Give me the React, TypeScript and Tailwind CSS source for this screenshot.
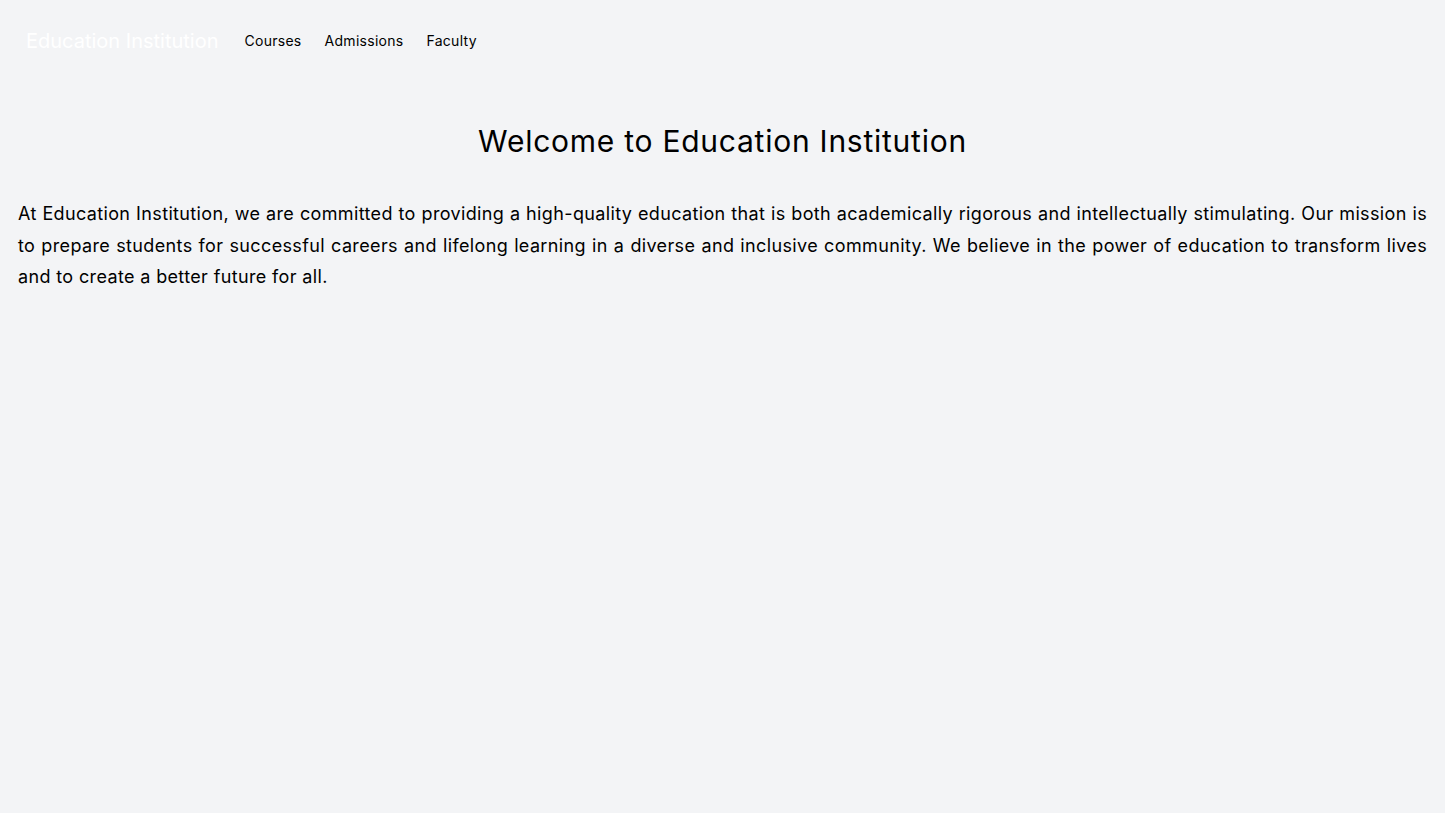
export default function App() {
  return (
    <div className="min-h-screen bg-gray-100 font-['Inter',sans-serif] text-black">
      <nav className="flex items-center pt-[27px] pb-6 pl-[26px] pr-6">
        <div className="text-xl text-white">Education Institution</div>
        <div className="ml-[26px] flex gap-[23px] text-sm tracking-[0.02em]">
          <a href="#">Courses</a>
          <a href="#">Admissions</a>
          <a href="#">Faculty</a>
        </div>
      </nav>
      <main className="px-[18px]">
        <h1 className="mt-11 text-center text-3xl tracking-[0.025em]">Welcome to Education Institution</h1>
        <p className="mt-[39px] text-justify text-lg leading-[1.75] tracking-[0.02em]">
          At Education Institution, we are committed to providing a high-quality education that is both academically rigorous and intellectually stimulating. Our mission is to prepare students for successful careers and lifelong learning in a diverse and inclusive community. We believe in the power of education to transform lives and to create a better future for all.
        </p>
      </main>
    </div>
  );
}
